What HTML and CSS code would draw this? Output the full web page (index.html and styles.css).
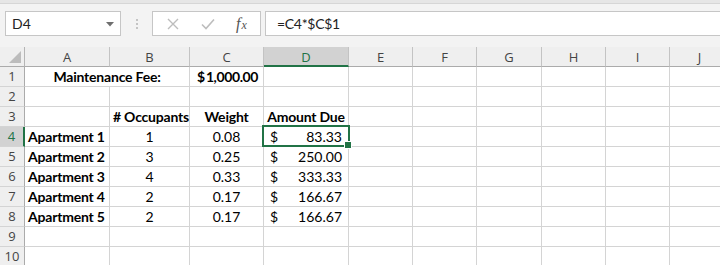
FILE: index.html
```
<!DOCTYPE html>
<html>
<head>
<meta charset="utf-8">
<link rel="stylesheet" href="styles.css">
</head>
<body>
<div class="app">
  <div class="topstrip"></div>
  <div class="bar">
    <div class="namebox">
      <span class="nb-text">D4</span>
      <svg class="nb-arrow" width="8" height="5" viewBox="0 0 8 5"><path d="M0 0 H8 L4 4.5 Z" fill="#6f6f6f"/></svg>
    </div>
    <div class="grip"><span></span><span></span><span></span></div>
    <div class="fbtns">
      <svg class="ico" width="12" height="12" viewBox="0 0 12 12"><path d="M1 1 L11 11 M11 1 L1 11" stroke="#bdbdbd" stroke-width="1.4" fill="none"/></svg>
      <svg class="ico" width="14" height="12" viewBox="0 0 14 12"><path d="M1 6.5 L5 10.5 L13 1.5" stroke="#bdbdbd" stroke-width="1.6" fill="none"/></svg>
      <span class="fx"><i>f</i><i class="x">x</i></span>
    </div>
    <div class="finput">=C4*$C$1</div>
  </div>
  <div class="sheet">
    <div class="corner"><svg width="14" height="14" viewBox="0 0 14 14"><path d="M13 1 V13 H1 Z" fill="#bcbcbc"/></svg></div>
    <div class="ch">A</div><div class="ch">B</div><div class="ch">C</div><div class="ch active">D</div><div class="ch">E</div><div class="ch">F</div><div class="ch">G</div><div class="ch">H</div><div class="ch">I</div><div class="ch">J</div>

    <div class="rh">1</div>
    <div class="c span2 b center">Maintenance Fee:</div><div class="c acc b fee"><span>$</span><span>1,000.00</span></div><div class="c"></div><div class="c"></div><div class="c"></div><div class="c"></div><div class="c"></div><div class="c"></div><div class="c"></div>

    <div class="rh">2</div>
    <div class="c"></div><div class="c"></div><div class="c"></div><div class="c"></div><div class="c"></div><div class="c"></div><div class="c"></div><div class="c"></div><div class="c"></div><div class="c"></div>

    <div class="rh">3</div>
    <div class="c"></div><div class="c b center"># Occupants</div><div class="c b center">Weight</div><div class="c b center">Amount Due</div><div class="c"></div><div class="c"></div><div class="c"></div><div class="c"></div><div class="c"></div><div class="c"></div>

    <div class="rh active">4</div>
    <div class="c b">Apartment 1</div><div class="c center">1</div><div class="c center">0.08</div><div class="c acc sel"><span>$</span><span>83.33</span></div><div class="c"></div><div class="c"></div><div class="c"></div><div class="c"></div><div class="c"></div><div class="c"></div>

    <div class="rh">5</div>
    <div class="c b">Apartment 2</div><div class="c center">3</div><div class="c center">0.25</div><div class="c acc"><span>$</span><span>250.00</span></div><div class="c"></div><div class="c"></div><div class="c"></div><div class="c"></div><div class="c"></div><div class="c"></div>

    <div class="rh">6</div>
    <div class="c b">Apartment 3</div><div class="c center">4</div><div class="c center">0.33</div><div class="c acc"><span>$</span><span>333.33</span></div><div class="c"></div><div class="c"></div><div class="c"></div><div class="c"></div><div class="c"></div><div class="c"></div>

    <div class="rh">7</div>
    <div class="c b">Apartment 4</div><div class="c center">2</div><div class="c center">0.17</div><div class="c acc"><span>$</span><span>166.67</span></div><div class="c"></div><div class="c"></div><div class="c"></div><div class="c"></div><div class="c"></div><div class="c"></div>

    <div class="rh">8</div>
    <div class="c b">Apartment 5</div><div class="c center">2</div><div class="c center">0.17</div><div class="c acc"><span>$</span><span>166.67</span></div><div class="c"></div><div class="c"></div><div class="c"></div><div class="c"></div><div class="c"></div><div class="c"></div>

    <div class="rh">9</div>
    <div class="c"></div><div class="c"></div><div class="c"></div><div class="c"></div><div class="c"></div><div class="c"></div><div class="c"></div><div class="c"></div><div class="c"></div><div class="c"></div>

    <div class="rh">10</div>
    <div class="c"></div><div class="c"></div><div class="c"></div><div class="c"></div><div class="c"></div><div class="c"></div><div class="c"></div><div class="c"></div><div class="c"></div><div class="c"></div>
  </div>
</div>
</body>
</html>
```
FILE: styles.css
```
* { box-sizing: border-box; }
html, body { margin: 0; padding: 0; overflow: hidden; }
body {
  width: 720px;
  height: 265px;
  background: #f3f3f3;
  font-family: Lato, "Liberation Sans", sans-serif;
}
.app { width: 720px; height: 265px; overflow: hidden; }
.topstrip {
  height: 4px;
  background: #e6e6e6;
  border-bottom: 1px solid #d6d6d6;
}
.bar {
  display: flex;
  align-items: stretch;
  height: 25px;
  margin-top: 7px;
  margin-bottom: 11px;
}
.namebox {
  margin-left: 5px;
  width: 116px;
  background: #fff;
  border: 1px solid #c6c6c6;
  display: flex;
  align-items: center;
  justify-content: space-between;
  padding: 0 6px 0 6px;
  font-size: 14px;
  color: #222;
}
.nb-arrow { margin-top: 1px; }
.grip {
  width: 31px;
  display: flex;
  flex-direction: column;
  align-items: center;
  justify-content: center;
  gap: 2px;
}
.grip span { width: 2px; height: 2px; background: #c4c4c4; }
.fbtns {
  width: 109px;
  background: #fff;
  border: 1px solid #c6c6c6;
  display: flex;
  align-items: center;
  padding-left: 14px;
}
.fbtns .ico:nth-child(1) { margin-right: 22px; }
.fbtns .ico:nth-child(2) { margin-right: 21px; }
.fx {
  font-family: "Liberation Serif", serif;
  color: #555;
  font-size: 16px;
  line-height: 1;
}
.fx .x { font-size: 12px; margin-left: 1px; }
.finput {
  margin-left: 4px;
  flex: 1;
  background: #fff;
  border: 1px solid #c6c6c6;
  border-right: none;
  padding-left: 11px;
  font-size: 14px;
  letter-spacing: -0.3px;
  line-height: 23px;
  color: #222;
}
.sheet {
  display: grid;
  grid-template-columns: 25px 85px 80px 74px 85px 64px 64px 65px 64px 64px 60px;
  grid-auto-rows: 20px;
  width: 730px;
}
.corner {
  background: #efefef;
  border-right: 1px solid #b5b5b5;
  border-bottom: 1px solid #ababab;
  display: flex;
  align-items: flex-end;
  justify-content: flex-end;
  padding: 0 2px 2px 0;
}
.ch {
  background: #efefef;
  border-right: 1px solid #c3c3c3;
  border-bottom: 1px solid #ababab;
  font-family: "Open Sans", "Noto Sans", sans-serif;
  font-size: 13px;
  color: #444;
  text-align: center;
  line-height: 20px;
}
.ch.active {
  background: #d2d2d2;
  color: #217346;
  border-bottom: 2px solid #217346;
}
.rh {
  background: #efefef;
  border-right: 1px solid #ababab;
  border-bottom: 1px solid #d4d4d4;
  font-family: "Open Sans", "Noto Sans", sans-serif;
  font-size: 13px;
  color: #444;
  text-align: center;
  line-height: 19px;
}
.rh.active {
  background: #d2d2d2;
  color: #217346;
  border-right: 2px solid #217346;
}
.c {
  background: #fff;
  border-right: 1px solid #d4d4d4;
  border-bottom: 1px solid #d4d4d4;
  font-size: 14px;
  line-height: 19px;
  padding: 0 3px;
  color: #000;
  white-space: nowrap;
}
.span2 { grid-column: span 2; }
.b { font-weight: bold; letter-spacing: -0.2px; }
.center { text-align: center; }
.acc {
  display: flex;
  justify-content: space-between;
  padding: 0 6px 0 6px;
}
.acc.fee { padding: 0 5px 0 7px; }
.acc.fee span + span { letter-spacing: -0.4px; }
.sel { position: relative; }
.sel::before {
  content: "";
  position: absolute;
  left: -2px;
  top: -2px;
  right: -2px;
  bottom: -1px;
  border: 2px solid #217346;
}
.sel::after {
  content: "";
  position: absolute;
  right: -4px;
  bottom: -3px;
  width: 6px;
  height: 6px;
  background: #217346;
  border: 1px solid #fff;
}
```
